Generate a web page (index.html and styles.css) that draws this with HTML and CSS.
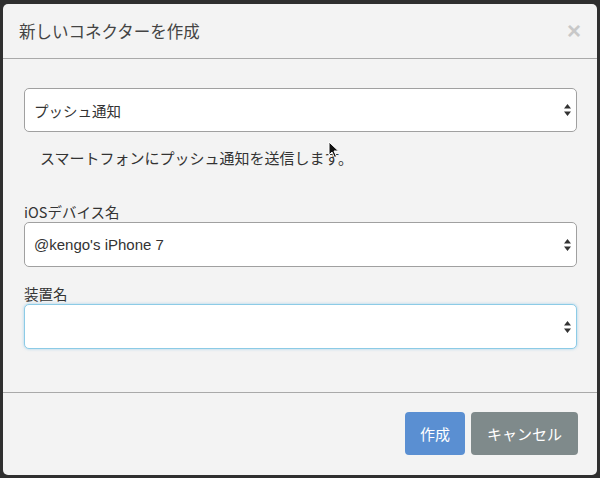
FILE: index.html
```html
<!DOCTYPE html>
<html lang="ja">
<head>
  <meta charset="UTF-8" />
  <meta name="viewport" content="width=device-width, initial-scale=1.0"/>
  <title>新しいコネクターを作成</title>
  <link rel="stylesheet" href="styles.css">
</head>
<body>

  <div class="modal">
    <div class="modal-header">
      <h4>新しいコネクターを作成</h4>
      <span class="close">&times;</span>
    </div>

    <div class="modal-body">
      <div class="select">
        <span>プッシュ通知</span>
        <svg class="arrows" width="7" height="12" viewBox="0 0 7 12"><path d="M3.5 0 L7 4.5 L0 4.5 Z M3.5 12 L7 7.5 L0 7.5 Z" fill="#333"/></svg>
      </div>
      <p class="help">スマートフォンにプッシュ通知を送信します。</p>

      <label class="first">iOSデバイス名</label>
      <div class="select">
        <span class="latin">@kengo's iPhone 7</span>
        <svg class="arrows" width="7" height="12" viewBox="0 0 7 12"><path d="M3.5 0 L7 4.5 L0 4.5 Z M3.5 12 L7 7.5 L0 7.5 Z" fill="#333"/></svg>
      </div>

      <label>装置名</label>
      <div class="select focus">
        <span></span>
        <svg class="arrows" width="7" height="12" viewBox="0 0 7 12"><path d="M3.5 0 L7 4.5 L0 4.5 Z M3.5 12 L7 7.5 L0 7.5 Z" fill="#333"/></svg>
      </div>

      <!-- マウスカーソル -->
      <svg class="cursor" width="12" height="18" viewBox="0 0 12 18"><path d="M1 1 L1 14 L4 11 L6.5 16.5 L8.5 15.5 L6 10 L10.5 10 Z" fill="#111" stroke="#fff" stroke-width="1"/></svg>
    </div>

    <div class="modal-footer">
      <button type="button" class="btn primary">作成</button>
      <button type="button" class="btn secondary">キャンセル</button>
    </div>
  </div>

</body>
</html>
```

FILE: styles.css
```css
body {
  margin: 0;
  padding: 4px 3px 3px 3px;
  background: #2f2f2f;
  font-family: "Liberation Sans", "Noto Sans CJK JP", sans-serif;
  color: #333;
}
.modal {
  width: 594px;
  height: 471px;
  background: #f3f3f3;
  border-radius: 5px;
  display: flex;
  flex-direction: column;
  overflow: hidden;
}
.modal-header {
  height: 54px;
  padding: 0 16px;
  display: flex;
  align-items: center;
  justify-content: space-between;
  border-bottom: 1px solid #a9a9a9;
}
.modal-header h4 {
  margin: 0;
  font-family: "Noto Sans CJK JP", sans-serif;
  font-size: 16.5px;
  font-weight: normal;
  color: #444;
}
.close {
  font-size: 24px;
  font-weight: bold;
  color: #c8c8c8;
  line-height: 1;
}
.modal-body {
  position: relative;
  flex: 1;
  padding: 29px 20px 0 21px;
  border-bottom: 1px solid #a9a9a9;
}
.select {
  height: 42px;
  border: 1px solid #a0a0a0;
  border-radius: 5px;
  background: #fff;
  display: flex;
  align-items: center;
  justify-content: space-between;
  padding: 0 5px 0 9px;
  font-family: "Noto Sans CJK JP", sans-serif;
  font-size: 14.5px;
  color: #333;
}
.select .latin {
  font-family: "Liberation Sans", sans-serif;
  font-size: 15px;
}
.select.focus {
  border-color: #8ccbe6;
  box-shadow: 0 0 3px rgba(102, 180, 225, 0.55);
}
.arrows {
  display: block;
}
.help {
  margin: 16px 0 0 16px;
  line-height: 20px;
  font-family: "Noto Sans CJK JP", sans-serif;
  font-size: 15px;
  color: #333;
}
label {
  display: block;
  margin-top: 17px;
  line-height: 20px;
  font-family: "Noto Sans CJK JP", sans-serif;
  font-size: 14.5px;
  color: #333;
}
label.first {
  margin-top: 34px;
}
label + .select {
  height: 43px;
}
.cursor {
  position: absolute;
  left: 325px;
  top: 82px;
}
.modal-footer {
  height: 82px;
  padding: 19px 19px 0 0;
  box-sizing: border-box;
  display: flex;
  justify-content: flex-end;
  align-items: flex-start;
  gap: 6px;
}
.btn {
  height: 43px;
  padding: 0 15px;
  border: none;
  border-radius: 4px;
  font-family: "Noto Sans CJK JP", sans-serif;
  font-size: 15px;
  color: #fff;
  cursor: pointer;
}
.btn.primary {
  background: #5a8fd2;
}
.btn.secondary {
  background: #7f8a8b;
  padding: 0 16px;
}
```
